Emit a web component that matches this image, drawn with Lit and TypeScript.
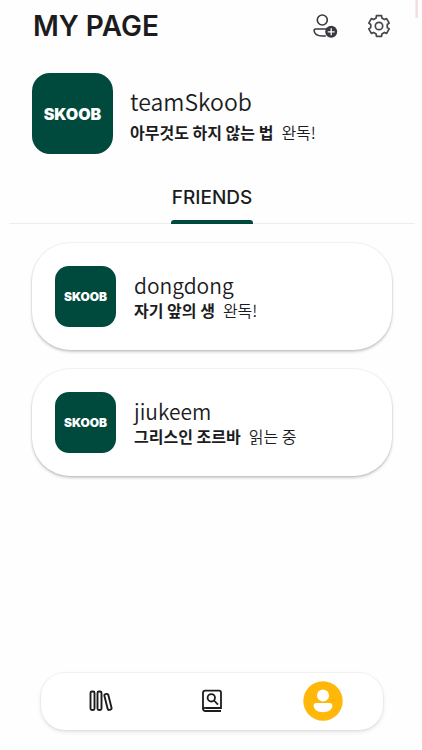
import { LitElement, html, css, svg } from "lit";
import { customElement, property } from "lit/decorators.js";

interface Reader {
  name: string;
  book: string;
  status: string;
}

const me: Reader = { name: "teamSkoob", book: "아무것도 하지 않는 법", status: "완독!" };

const friends: Reader[] = [
  { name: "dongdong", book: "자기 앞의 생", status: "완독!" },
  { name: "jiukeem", book: "그리스인 조르바", status: "읽는 중" },
];

// Six-toothed outline, built from polar points around the centre.
const gearPoints = Array.from({ length: 6 }, (_, i) =>
  [[-14, 10.6], [14, 10.6], [20, 8.4], [40, 8.4]].map(([offset, radius]) => {
    const angle = ((i * 60 + offset - 90) * Math.PI) / 180;
    return `${(12 + radius * Math.cos(angle)).toFixed(2)},${(12 + radius * Math.sin(angle)).toFixed(2)}`;
  }).join(" ")
).join(" ");

const addFriendIcon = html`<svg width="26" height="26" viewBox="0 0 26 26" aria-hidden="true">
  <circle cx="9.3" cy="7" r="5" fill="none" stroke="#38383e" stroke-width="1.6" />
  <path d="M14 16H2.600c-1 0-1.600.7-1.500 1.800.4 3.600 3.800 5.200 8.200 5.200h3" fill="none" stroke="#38383e" stroke-width="1.6" stroke-linecap="round" />
  <circle cx="18.200" cy="18.800" r="6" fill="#38383e" />
  <path d="M18.200 15.300v7M14.700 18.800h7" stroke="#fff" stroke-width="1.3" />
</svg>`;

const gearIcon = html`<svg width="24" height="24" viewBox="0 0 24 24" fill="none" stroke="#46464c" stroke-width="1.7" stroke-linejoin="round" aria-hidden="true">
  ${svg`<polygon points=${gearPoints} />`}
  <circle cx="12" cy="12" r="3.7" />
</svg>`;

const shelfIcon = html`<svg width="26" height="24" viewBox="0 0 26 24" fill="none" stroke="#1c1c1e" stroke-width="1.9" aria-hidden="true">
  <rect x="2.5" y="2.500" width="4" height="18.500" rx="1.500" />
  <rect x="9.500" y="2.500" width="4" height="18.500" rx="1.500" />
  <rect x="18" y="4.800" width="4" height="16.200" rx="1.500" transform="rotate(-14 20 13)" />
</svg>`;

const searchBookIcon = html`<svg width="24" height="24" viewBox="0 0 24 24" fill="none" stroke="#1c1c1e" stroke-width="1.8" aria-hidden="true">
  <path d="M21 22H5.200A2.200 2.200 0 0 1 3 19.800V3.800a2.200 2.200 0 0 1 2.200-2.200H19A2 2 0 0 1 21 3.600v15.400H5.200" />
  <path d="M5.200 19A2 2 0 0 0 3 20" />
  <circle cx="11.300" cy="8.800" r="3.700" />
  <path d="M14 11.500l4 4.200" />
</svg>`;

const profileIcon = html`<svg width="40" height="40" viewBox="0 0 40 40" aria-hidden="true">
  <circle cx="20" cy="20" r="19.700" fill="#ffb70a" />
  <circle cx="20" cy="14.500" r="6" fill="#fff" />
  <path d="M13.200 22h13.600c1.600 0 2.600 1 2.600 2.500 0 4.300-4.400 6.700-9.400 6.700s-9.400-2.400-9.400-6.700c0-1.500 1-2.500 2.600-2.500z" fill="#fff" />
</svg>`;

@customElement("reader-summary")
export class ReaderSummary extends LitElement {
  @property({ attribute: false }) reader!: Reader;
  @property({ type: Boolean, reflect: true }) large = false;

  static styles = css`
    :host {
      display: flex;
      align-items: center;
      gap: 18px;
      font-family: "Noto Sans CJK KR", sans-serif;
      color: #1c1c1e;
    }
    .avatar {
      flex: none;
      display: grid;
      place-items: center;
      width: 61px;
      height: 61px;
      border-radius: 14px;
      background: #004a3d;
      color: #fff;
      font: 900 12px/16px Inter, sans-serif;
    }
    .name {
      margin: 0;
      font-size: 21px;
      line-height: 26px;
      font-weight: 350;
    }
    .reading {
      margin: 0;
      font-size: 16px;
      line-height: 24px;
      font-weight: 350;
    }
    .book {
      font-weight: 700;
      margin-right: 8px;
    }
    :host([large]) {
      gap: 17px;
    }
    :host([large]) .avatar {
      width: 81px;
      height: 81px;
      border-radius: 18px;
      font-size: 16px;
    }
    :host([large]) .name {
      font-size: 23px;
      line-height: 32px;
    }
    :host([large]) .text {
      padding-top: 4px;
    }
    :host([large]) .reading {
      line-height: 30px;
    }
  `;

  render() {
    return html`
      <div class="avatar">SKOOB</div>
      <div class="text">
        <h2 class="name">${this.reader.name}</h2>
        <p class="reading"><span class="book">${this.reader.book}</span>${this.reader.status}</p>
      </div>
    `;
  }
}

@customElement("app-root")
export class AppRoot extends LitElement {
  static styles = css`
    :host {
      display: block;
      color: #1c1c1e;
      background: #fefefe;
      font-family: Inter, sans-serif;
    }
    .page {
      position: relative;
      box-sizing: border-box;
      min-height: 100vh;
      display: flex;
      flex-direction: column;
      padding: 0 7px 20px 9px;
    }
    .edge {
      position: absolute;
      top: 0;
      right: 4px;
      width: 2px;
      height: 18px;
      border-left: 1px solid #f7eaec;
      background: #f4e0e3;
    }
    button {
      border: 0;
      padding: 0;
      background: none;
      color: inherit;
      font: inherit;
      cursor: pointer;
    }
    svg {
      display: block;
    }
    .header {
      display: flex;
      align-items: center;
      justify-content: space-between;
      height: 52px;
      padding: 0 24px;
    }
    .title {
      margin: 0;
      font-size: 28px;
      line-height: 36px;
      font-weight: 600;
    }
    .actions {
      display: flex;
      align-items: center;
      gap: 28px;
    }
    .me {
      padding: 21px 23px 20px;
    }
    .tabs {
      display: flex;
      justify-content: center;
      height: 49px;
      border-bottom: 1px solid #ededed;
    }
    .tab {
      position: relative;
      padding: 0 1px 2px;
      font-size: 19px;
      line-height: 24px;
      font-weight: 500;
    }
    .tab::after {
      content: "";
      position: absolute;
      left: 0;
      right: 0;
      bottom: -1px;
      height: 4px;
      border-radius: 3px 3px 0 0;
      background: #004a3d;
    }
    .friends {
      display: flex;
      flex-direction: column;
      gap: 19px;
      margin: 19px 23px 40px;
      padding: 0;
      list-style: none;
    }
    .card {
      padding: 23px;
      border-radius: 38px;
      background: #fff;
      box-shadow: 0 0 1px 1px #0000000d, 0 2px 3px #00000033;
    }
    .nav {
      display: grid;
      grid-template-columns: repeat(3, 1fr);
      margin: auto 32px 0;
      padding: 8px 5px 9px;
      border-radius: 24px;
      background: #fff;
      box-shadow: 0 0 1px 1px #0000000a, 0 2px 4px #0000001c;
    }
    .item {
      display: grid;
      place-items: center;
      height: 40px;
    }
  `;

  render() {
    return html`
      <div class="page">
        <span class="edge"></span>
        <header class="header">
          <h1 class="title">MY PAGE</h1>
          <div class="actions">
            <button aria-label="Add friend">${addFriendIcon}</button>
            <button aria-label="Settings">${gearIcon}</button>
          </div>
        </header>
        <reader-summary class="me" large .reader=${me}></reader-summary>
        <div class="tabs" role="tablist">
          <button class="tab" role="tab" aria-selected="true">FRIENDS</button>
        </div>
        <ul class="friends">
          ${friends.map(
            (friend) => html`<li class="card"><reader-summary .reader=${friend}></reader-summary></li>`
          )}
        </ul>
        <nav class="nav">
          <button class="item" aria-label="Library">${shelfIcon}</button>
          <button class="item" aria-label="Search books">${searchBookIcon}</button>
          <button class="item" aria-label="My page" aria-current="page">${profileIcon}</button>
        </nav>
      </div>
    `;
  }
}
